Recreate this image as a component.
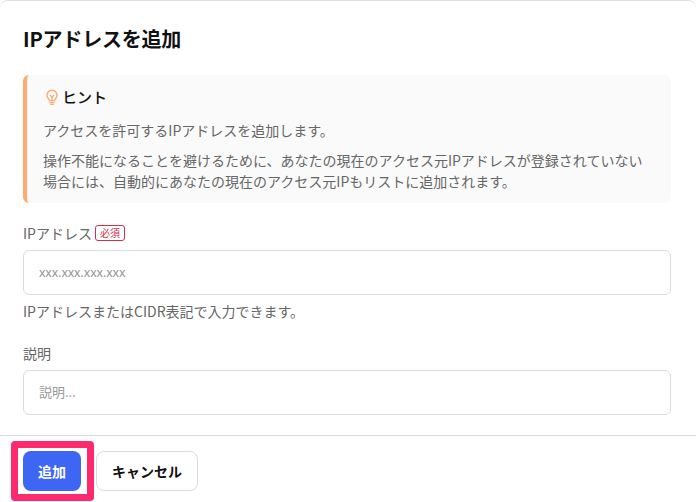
<script>
</script>

<div class="modal">
  <div class="body">
    <h2>IPアドレスを追加</h2>
    <div class="hint">
      <div class="hint-title">
        <svg width="16" height="18" viewBox="0 0 16 18" fill="none" stroke="#ffab70" stroke-width="1.4" stroke-linecap="round" stroke-linejoin="round">
          <path d="M5.4 12.6c0-1.4-2.4-2.6-2.4-5.4a5 5 0 0 1 10 0c0 2.8-2.4 4-2.4 5.4z"/>
          <path d="M6.4 7.4 8 9l1.6-1.6M8 9v3.4"/>
          <path d="M5.8 14.6h4.4M6.8 16.4h2.4"/>
        </svg>
        <span>ヒント</span>
      </div>
      <p class="first">アクセスを許可するIPアドレスを追加します。</p>
      <p>操作不能になることを避けるために、あなたの現在のアクセス元IPアドレスが登録されていない場合には、自動的にあなたの現在のアクセス元IPもリストに追加されます。</p>
    </div>
    <div class="field">
      <div class="label"><span>IPアドレス</span><span class="req">必須</span></div>
      <input class="input ip" placeholder="xxx.xxx.xxx.xxx" />
      <div class="help">IPアドレスまたはCIDR表記で入力できます。</div>
    </div>
    <div class="field second">
      <div class="label"><span>説明</span></div>
      <input class="input" placeholder="説明..." />
    </div>
  </div>
  <div class="footer">
    <button class="primary">追加</button>
    <button class="secondary">キャンセル</button>
    <div class="highlight"></div>
  </div>
</div>

<style>
  :global(body) {
    margin: 0;
    background: #fff;
  }
  .modal {
    width: 696px;
    height: 502px;
    box-sizing: border-box;
    border-top: 1px solid #e0e0e0;
    border-radius: 8px 8px 0 0;
    display: flex;
    flex-direction: column;
    overflow: hidden;
    font-family: "Noto Sans CJK JP", "Noto Sans", sans-serif;
    color: #666;
  }
  .body {
    height: 434px;
    box-sizing: border-box;
    padding: 22px 25px 0 23px;
  }
  h2 {
    margin: 0;
    font-size: 20px;
    line-height: 32px;
    font-weight: 700;
    color: #111;
    letter-spacing: -0.2px;
  }
  .hint {
    margin-top: 20px;
    height: 128px;
    box-sizing: border-box;
    padding: 8px 20px 0 16px;
    background: #fafafa;
    border-left: 4px solid #ffab70;
    border-radius: 6px;
  }
  .hint-title {
    display: flex;
    align-items: center;
    gap: 2px;
    height: 26px;
    font-size: 15px;
    font-weight: 500;
    color: #111;
  }
  .hint-title svg {
    margin-top: 2px;
    margin-left: 1px;
  }
  p {
    margin: 0;
    font-size: 14px;
    line-height: 21px;
    color: #666;
  }
  p.first {
    margin: 11px 0 9px;
  }
  .field {
    margin-top: 20px;
  }
  .field.second {
    margin-top: 21px;
  }
  .label {
    display: flex;
    align-items: center;
    gap: 3px;
    height: 20px;
    font-size: 14px;
    color: #666;
  }
  .req {
    font-size: 10px;
    line-height: 14px;
    padding: 0 4px;
    color: #d0304a;
    border: 1px solid #d0304a;
    border-radius: 3px;
  }
  .input {
    display: block;
    width: 100%;
    height: 45px;
    margin-top: 7px;
    box-sizing: border-box;
    padding: 0 15px 2px;
    border: 1px solid #dcdcdc;
    border-radius: 6px;
    background: #fff;
    font-family: inherit;
    font-size: 13px;
    outline: none;
  }
  .input.ip {
    letter-spacing: -0.13px;
  }
  .input::placeholder {
    color: #999;
    opacity: 1;
  }
  .help {
    margin-top: 5px;
    font-size: 14px;
    line-height: 22px;
    color: #666;
  }
  .footer {
    position: relative;
    flex: 1;
    display: flex;
    align-items: flex-start;
    gap: 15px;
    padding: 15px 0 0 23px;
    border-top: 1px solid #dcdcdc;
  }
  button {
    height: 40px;
    box-sizing: border-box;
    font-family: inherit;
    font-size: 14px;
    font-weight: 700;
    border-radius: 8px;
    padding: 0;
  }
  .primary {
    width: 58px;
    border: none;
    background: #3d66f5;
    color: #fff;
  }
  .secondary {
    width: 102px;
    border: 1px solid #dcdcdc;
    background: #fff;
    color: #111;
  }
  .highlight {
    position: absolute;
    left: 11px;
    top: 5px;
    width: 83px;
    height: 60px;
    box-sizing: border-box;
    border: 7px solid #ff2a6d;
    border-radius: 4px;
    pointer-events: none;
  }
</style>
